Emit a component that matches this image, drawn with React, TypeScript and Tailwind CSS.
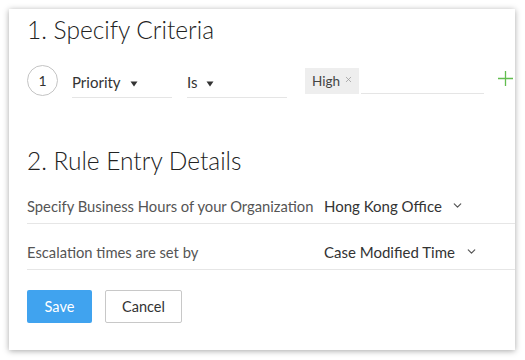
import { ChevronDown, X } from "lucide-react";

const font = { fontFamily: "Lato, 'Open Sans', sans-serif" };

function Caret() {
  return (
    <svg width="8" height="6" viewBox="0 0 8 6" className="ml-[9px] mt-[2px]">
      <path d="M0.5 0.5 L7.5 0.5 L4 5.5 Z" fill="#333" />
    </svg>
  );
}

function PlusIcon() {
  return (
    <svg width="15" height="15" viewBox="0 0 15 15" className="ml-[14px] mt-[-3px]">
      <path d="M7.5 0 V15 M0 7.5 H15" stroke="#62bd4f" strokeWidth="1.3" fill="none" />
    </svg>
  );
}

function SelectLine({ label, width }: { label: string; width: string }) {
  return (
    <div className={`flex h-[30px] items-center border-b border-[#e5e5e5] ${width}`}>
      <span className="text-[15px] text-[#333]">{label}</span>
      <Caret />
    </div>
  );
}

function DetailRow({ label, value, valueWidth }: { label: string; value: string; valueWidth: string }) {
  return (
    <div className="flex h-[46px] items-end border-b border-[#e6e6e6] pb-[6px]">
      <span className="w-[297px] text-[14.75px] text-[#555]">{label}</span>
      <div className={`flex items-center pt-[3px] ${valueWidth}`}>
        <span className="text-[15px] text-[#333]">{value}</span>
        <ChevronDown className="ml-auto h-[13px] w-[13px] text-[#555]" strokeWidth={2.2} />
      </div>
    </div>
  );
}

export default function App() {
  return (
    <div className="h-[360px] w-[525px] bg-white pl-[9px] pt-[9px]" style={font}>
      <div className="h-[341px] w-[506px] bg-white pl-[18px] shadow-[0_1px_6px_rgba(0,0,0,0.35)]">
        <h1 className="pt-[6px] text-[24.5px] font-light leading-[30px] text-[#222]">
          1. Specify Criteria
        </h1>

        <div className="mt-[17px] flex items-center">
          <div className="flex h-[31px] w-[31px] items-center justify-center rounded-full border border-[#c4c4c4] text-[14px] text-[#333]">
            1
          </div>
          <div className="ml-[14px] mt-[6px]">
            <SelectLine label="Priority" width="w-[100px]" />
          </div>
          <div className="ml-[15px] mt-[6px]">
            <SelectLine label="Is" width="w-[100px]" />
          </div>
          <div className="ml-[18px] mt-[2px] flex items-end">
            <div className="flex h-[26px] items-center bg-[#eeeeee] pl-[7px] pr-[6px]">
              <span className="text-[13.5px] text-[#444]">High</span>
              <X className="ml-[4px] mb-[3px] h-[9px] w-[9px] text-[#999]" strokeWidth={2} />
            </div>
            <div className="ml-[2px] h-[26px] w-[123px] border-b border-[#e5e5e5]" />
          </div>
          <PlusIcon />
        </div>

        <h2 className="mt-[48px] text-[24.5px] font-light leading-[30px] text-[#222]">
          2. Rule Entry Details
        </h2>

        <div className="mt-[2px]">
          <DetailRow
            label="Specify Business Hours of your Organization"
            value="Hong Kong Office"
            valueWidth="w-[140px]"
          />
          <DetailRow label="Escalation times are set by" value="Case Modified Time" valueWidth="w-[154px]" />
        </div>

        <div className="mt-[20px] flex gap-[13px]">
          <button className="h-[33px] w-[65px] rounded-[2px] bg-[#40a3ef] text-[14.5px] text-white">Save</button>
          <button className="h-[33px] w-[77px] rounded-[2px] border border-[#c8c8c8] bg-white text-[14.5px] text-[#333]">
            Cancel
          </button>
        </div>
      </div>
    </div>
  );
}
